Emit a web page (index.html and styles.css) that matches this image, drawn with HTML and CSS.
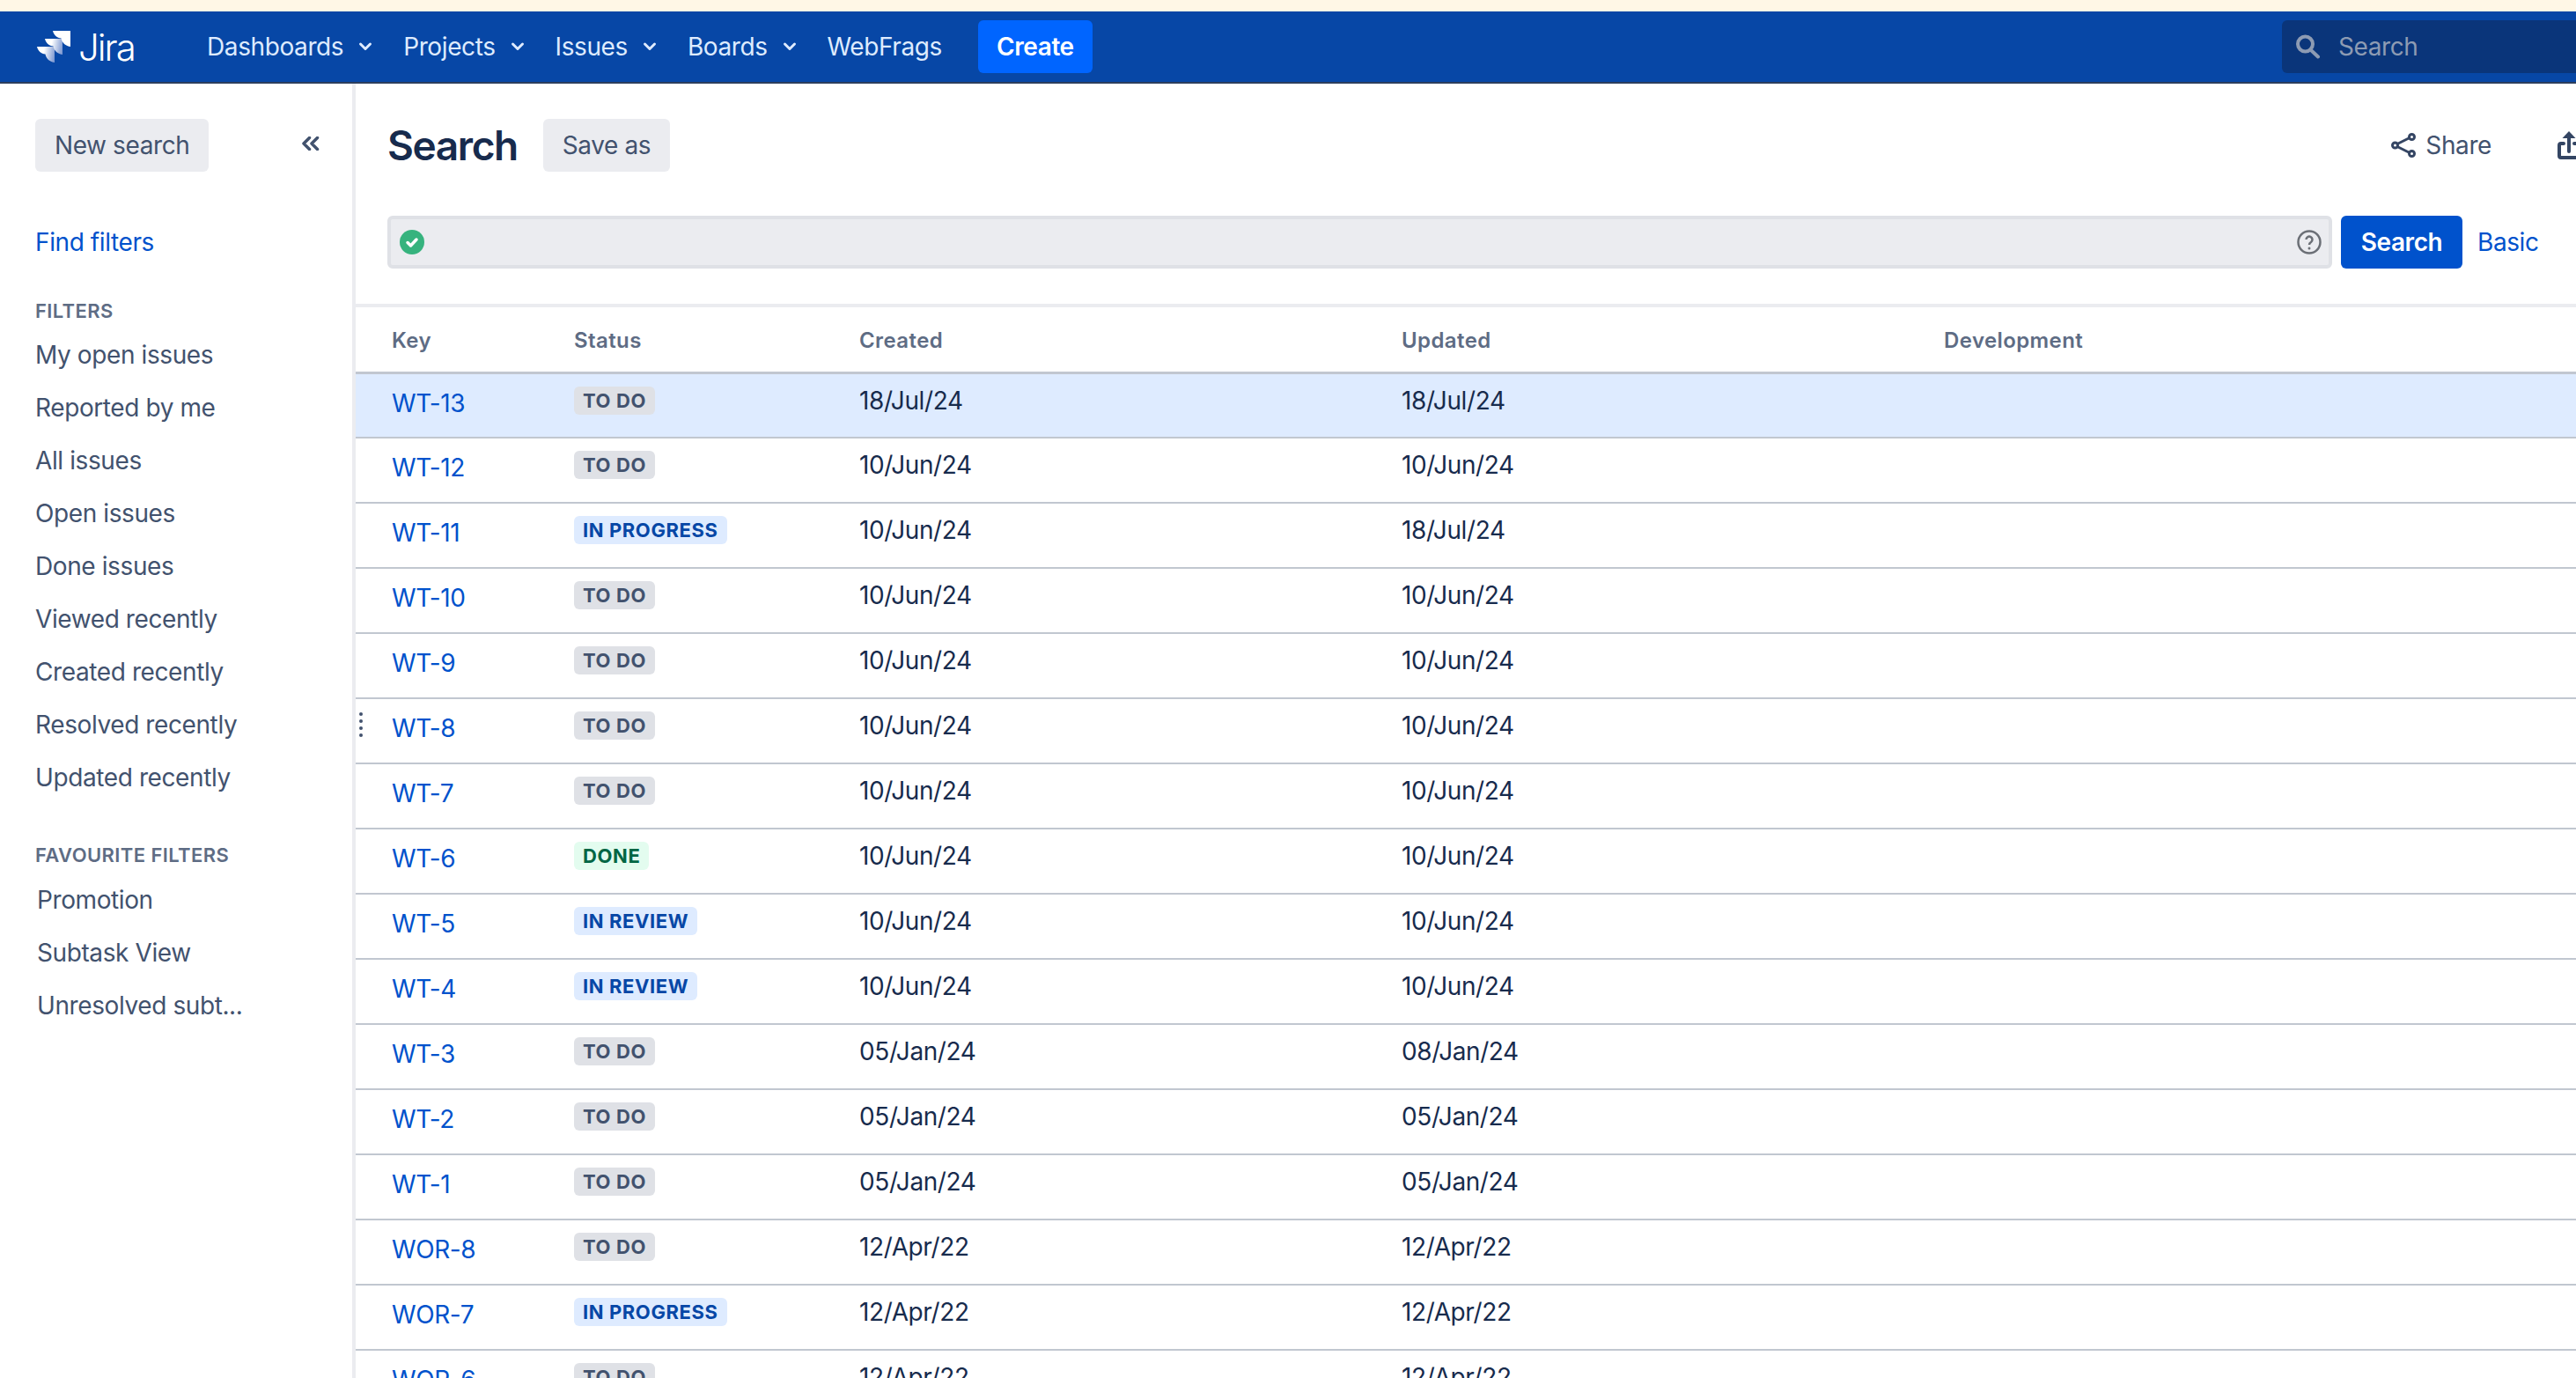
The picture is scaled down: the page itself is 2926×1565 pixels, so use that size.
FILE: index.html
```html
<!DOCTYPE html>
<html lang="en">
<head>
<meta charset="utf-8">
<title>Search - Jira</title>
<link rel="stylesheet" href="styles.css">
</head>
<body>
<div class="page">
  <div class="banner"></div>
  <header class="nav">
    <a class="logo">
      <svg class="logo-mark" viewBox="0 0 38 36">
        <defs>
          <linearGradient id="g1" x1="0.35" y1="0.5" x2="1" y2="0.6"><stop offset="0" stop-color="#fff"/><stop offset="1" stop-color="#7f9ad2"/></linearGradient>
        </defs>
        <path d="M0 18H20V36C13 35 10 30 9.500 26.500C5 26 1 23 0 18Z" fill="url(#g1)"/>
        <path d="M9 9H29V27C22 26 19 21 18.500 17.500C14 17 10 14 9 9Z" fill="url(#g1)"/>
        <path d="M18 0H38V18C31 17 28 12 27.500 8.500C23 8 19 5 18 0Z" fill="#fff"/>
      </svg>
      <span class="logo-text">Jira</span>
    </a>
    <nav class="menu">
      <a class="menu-item">Dashboards<svg class="chev" viewBox="0 0 16 16"><path d="M2.500 5l5.500 5.500L13.500 5"/></svg></a>
      <a class="menu-item">Projects<svg class="chev" viewBox="0 0 16 16"><path d="M2.500 5l5.500 5.500L13.500 5"/></svg></a>
      <a class="menu-item">Issues<svg class="chev" viewBox="0 0 16 16"><path d="M2.500 5l5.500 5.500L13.500 5"/></svg></a>
      <a class="menu-item">Boards<svg class="chev" viewBox="0 0 16 16"><path d="M2.500 5l5.500 5.500L13.500 5"/></svg></a>
      <a class="menu-item">WebFrags</a>
    </nav>
    <a class="create">Create</a>
    <div class="nav-search">
      <svg class="nav-search-icon" viewBox="0 0 28 28"><circle cx="10.500" cy="11" r="8.500"/><path d="M17 18l8 7.500"/></svg>
      <span>Search</span>
    </div>
  </header>
  <div class="body">
    <aside class="side">
      <div class="side-top">
        <a class="btn">New search</a>
        <svg class="collapse" viewBox="0 0 21 16"><path d="M9.500 1.500L3 8l6.500 6.500M18.500 1.500L12 8l6.500 6.500"/></svg>
      </div>
      <a class="find">Find filters</a>
      <h4 class="side-head">FILTERS</h4>
      <ul class="side-list">
        <li>My open issues</li><li>Reported by me</li><li>All issues</li><li>Open issues</li><li>Done issues</li><li>Viewed recently</li><li>Created recently</li><li>Resolved recently</li><li>Updated recently</li>
      </ul>
      <h4 class="side-head fav">FAVOURITE FILTERS</h4>
      <ul class="side-list fav-list">
        <li>Promotion</li><li>Subtask View</li><li>Unresolved subt...</li>
      </ul>
    </aside>
    <main class="main">
      <div class="head">
        <h1 class="title">Search</h1>
        <a class="btn">Save as</a>
        <a class="share">
          <svg class="share-icon" viewBox="0 0 28 28"><circle cx="4.500" cy="14" r="3"/><circle cx="23.500" cy="4.500" r="3"/><circle cx="23.500" cy="23.500" r="3"/><path d="M7 12.500L21 5.500M7 15.500l14 7"/></svg>
          Share
        </a>
        <svg class="export-icon" viewBox="0 0 26 32"><path d="M7 14H4a2 2 0 0 0-2 2v12a2 2 0 0 0 2 2h18a2 2 0 0 0 2-2V16a2 2 0 0 0-2-2h-3"/><path d="M13 23V6"/><path class="export-head" d="M13 0l7.500 8h-15z"/></svg>
      </div>
      <div class="jql-row">
        <div class="jql">
          <svg class="ok" viewBox="0 0 28 28"><circle cx="14" cy="14" r="14"/><path d="M9 14.500l3.500 3.500 6.500-7"/></svg>
          <svg class="help" viewBox="0 0 28 28"><circle cx="14" cy="14" r="12.500"/><path d="M10.500 11a3.500 3.500 0 1 1 5.500 3c-1.300.8-2 1.500-2 3"/><circle class="help-dot" cx="14" cy="21" r="1.500"/></svg>
        </div>
        <a class="search-btn">Search</a>
        <a class="basic">Basic</a>
      </div>
      <table class="issues">
        <thead>
          <tr><th class="c-key">Key</th><th class="c-status">Status</th><th class="c-date">Created</th><th class="c-date">Updated</th><th>Development</th></tr>
        </thead>
        <tbody>
          <tr class="active"><td><a>WT-13</a></td><td><span class="loz todo">To Do</span></td><td>18/Jul/24</td><td>18/Jul/24</td><td></td></tr>
          <tr><td><a>WT-12</a></td><td><span class="loz todo">To Do</span></td><td>10/Jun/24</td><td>10/Jun/24</td><td></td></tr>
          <tr><td><a>WT-11</a></td><td><span class="loz prog">In Progress</span></td><td>10/Jun/24</td><td>18/Jul/24</td><td></td></tr>
          <tr><td><a>WT-10</a></td><td><span class="loz todo">To Do</span></td><td>10/Jun/24</td><td>10/Jun/24</td><td></td></tr>
          <tr><td><a>WT-9</a></td><td><span class="loz todo">To Do</span></td><td>10/Jun/24</td><td>10/Jun/24</td><td></td></tr>
          <tr><td class="has-handle"><span class="handle"><i></i><i></i><i></i><i></i></span><a>WT-8</a></td><td><span class="loz todo">To Do</span></td><td>10/Jun/24</td><td>10/Jun/24</td><td></td></tr>
          <tr><td><a>WT-7</a></td><td><span class="loz todo">To Do</span></td><td>10/Jun/24</td><td>10/Jun/24</td><td></td></tr>
          <tr><td><a>WT-6</a></td><td><span class="loz done">Done</span></td><td>10/Jun/24</td><td>10/Jun/24</td><td></td></tr>
          <tr><td><a>WT-5</a></td><td><span class="loz prog">In Review</span></td><td>10/Jun/24</td><td>10/Jun/24</td><td></td></tr>
          <tr><td><a>WT-4</a></td><td><span class="loz prog">In Review</span></td><td>10/Jun/24</td><td>10/Jun/24</td><td></td></tr>
          <tr><td><a>WT-3</a></td><td><span class="loz todo">To Do</span></td><td>05/Jan/24</td><td>08/Jan/24</td><td></td></tr>
          <tr><td><a>WT-2</a></td><td><span class="loz todo">To Do</span></td><td>05/Jan/24</td><td>05/Jan/24</td><td></td></tr>
          <tr><td><a>WT-1</a></td><td><span class="loz todo">To Do</span></td><td>05/Jan/24</td><td>05/Jan/24</td><td></td></tr>
          <tr><td><a>WOR-8</a></td><td><span class="loz todo">To Do</span></td><td>12/Apr/22</td><td>12/Apr/22</td><td></td></tr>
          <tr><td><a>WOR-7</a></td><td><span class="loz prog">In Progress</span></td><td>12/Apr/22</td><td>12/Apr/22</td><td></td></tr>
          <tr><td><a>WOR-6</a></td><td><span class="loz todo">To Do</span></td><td>12/Apr/22</td><td>12/Apr/22</td><td></td></tr>
        </tbody>
      </table>
    </main>
  </div>
</div>
</body>
</html>
```
FILE: styles.css
```css
* { box-sizing: border-box; }
html, body { margin: 0; padding: 0; height: 100%; overflow: hidden; background: #fff; }
body { font-family: Inter, "Liberation Sans", sans-serif; font-size: 28px; letter-spacing: -0.4px; color: #172b4d; }
a { text-decoration: none; cursor: pointer; }
.page { width: 2926px; height: 1565px; overflow: hidden; display: flex; flex-direction: column; }
.banner { height: 13px; background: #fff7e6; flex: none; }
.nav { height: 82px; flex: none; background: #0747a6; border-bottom: 2px solid #2c3e5d; display: flex; align-items: center; padding-left: 42px; color: #deebff; }
.logo { display: flex; align-items: center; width: 193px; flex: none; }
.logo-mark { width: 38px; height: 36px; flex: none; }
.logo-text { font-size: 42px; font-weight: 300; letter-spacing: -2px; color: #fff; margin-left: 9px; }
.menu { display: flex; align-items: center; }
.menu-item { display: flex; align-items: center; color: #deebff; margin-right: 35px; }
.chev { width: 16px; height: 16px; margin-left: 17px; fill: none; stroke: #deebff; stroke-width: 3; stroke-linecap: round; stroke-linejoin: round; flex: none; }
.create { background: #0065ff; color: #fff; font-weight: 600; height: 60px; line-height: 60px; padding: 0 21px; border-radius: 6px; margin-left: 6px; }
.nav-search { margin-left: auto; width: 334px; height: 60px; background: #0a357a; border-radius: 6px 0 0 6px; display: flex; align-items: center; padding-left: 16px; color: #8d9bb3; gap: 20px; flex: none; }
.nav-search-icon { width: 28px; height: 28px; fill: none; stroke: #8d9bb3; stroke-width: 4; stroke-linecap: round; flex: none; }
.body { flex: 1; display: flex; min-height: 0; }
.side { width: 404px; flex: none; border-right: 4px solid #ebecf0; padding: 40px 0 0 40px; color: #42526e; }
.side-top { display: flex; align-items: center; justify-content: space-between; padding-right: 37px; }
.collapse { width: 21px; height: 16px; margin-top: -4px; fill: none; stroke: #42526e; stroke-width: 3.500; stroke-linecap: round; stroke-linejoin: round; flex: none; }
.btn { display: inline-block; height: 60px; line-height: 60px; padding: 0 22px; background: #ebecf0; border-radius: 6px; color: #42526e; }
.find { display: block; color: #0052cc; margin-top: 62px; line-height: 36px; }
.side-head { margin: 46px 0 0; font-size: 22px; letter-spacing: 0.4px; line-height: 28px; font-weight: 600; color: #5e6c84; }
.side-list { list-style: none; margin: 6px 0 0; padding: 0; }
.side-list li { height: 60px; line-height: 60px; }
.side-head.fav { margin-top: 44px; }
.fav-list { padding-left: 2px; margin-top: 7px; }
.main { flex: 1; min-width: 0; }
.head { display: flex; align-items: center; padding: 40px 0 0 36px; height: 100px; }
.title { margin: 0 29px 0 0; font-size: 46px; font-weight: 600; letter-spacing: -1.400px; color: #172b4d; line-height: 60px; }
.share { display: flex; align-items: center; gap: 11px; margin-left: auto; color: #42526e; }
.share-icon { width: 28px; height: 28px; fill: none; stroke: #344563; stroke-width: 3; }
.export-icon { width: 26px; height: 32px; margin-left: 75px; margin-right: -5px; flex: none; fill: none; stroke: #344563; stroke-width: 4; stroke-linecap: round; stroke-linejoin: round; }
.export-head { fill: #344563; stroke: none; }
.jql-row { display: flex; align-items: center; height: 60px; margin-top: 50px; padding-left: 36px; }
.jql { width: 2209px; height: 60px; background: #ebecf0; border: 4px solid #dfe1e6; border-radius: 6px; display: flex; align-items: center; justify-content: space-between; padding: 0 8px 0 10px; flex: none; }
.ok { width: 28px; height: 28px; }
.ok circle { fill: #36b37e; }
.ok path { fill: none; stroke: #fff; stroke-width: 3.500; stroke-linecap: round; stroke-linejoin: round; }
.help { width: 28px; height: 28px; fill: none; stroke: #6b6f76; stroke-width: 2.500; }
.help-dot { fill: #6b6f76; stroke: none; }
.search-btn { margin-left: 10px; width: 138px; height: 60px; line-height: 60px; text-align: center; background: #0052cc; color: #fff; font-weight: 600; border-radius: 6px; flex: none; }
.basic { margin-left: 17px; color: #0052cc; }
.issues { width: 100%; margin-top: 40px; border-collapse: collapse; table-layout: fixed; border-top: 4px solid #ebecf0; }
.issues th { height: 76px; padding: 4px 0 0 41px; text-align: left; font-size: 24px; letter-spacing: 0.4px; line-height: 28px; font-weight: 600; color: #5e6c84; border-bottom: 3px solid #c1c7d0; }
.issues th:not(:first-child) { padding-left: 0; }
.c-key { width: 248px; }
.c-status { width: 324px; }
.c-date { width: 616px; }
.issues td { height: 74px; padding: 14px 0 0; vertical-align: top; border-bottom: 2px solid #c1c7d0; line-height: 32px; }
.issues td:first-child { padding-left: 41px; position: relative; }
.issues td:first-child a { color: #0052cc; display: block; padding-top: 3px; }
.active td { background: #deebff; }
.loz { display: inline-block; height: 32px; line-height: 32px; padding: 0 10px; border-radius: 6px; font-size: 22px; font-weight: 700; letter-spacing: 0.6px; text-transform: uppercase; vertical-align: top; }
.todo { background: #dfe1e6; color: #42526e; }
.prog { background: #deebff; color: #0747a6; }
.done { background: #e3fcef; color: #006644; }
.handle { position: absolute; left: 4px; top: 15px; display: flex; flex-direction: column; gap: 4px; }
.handle i { display: block; width: 4px; height: 4px; border-radius: 50%; background: #42526e; }
```
